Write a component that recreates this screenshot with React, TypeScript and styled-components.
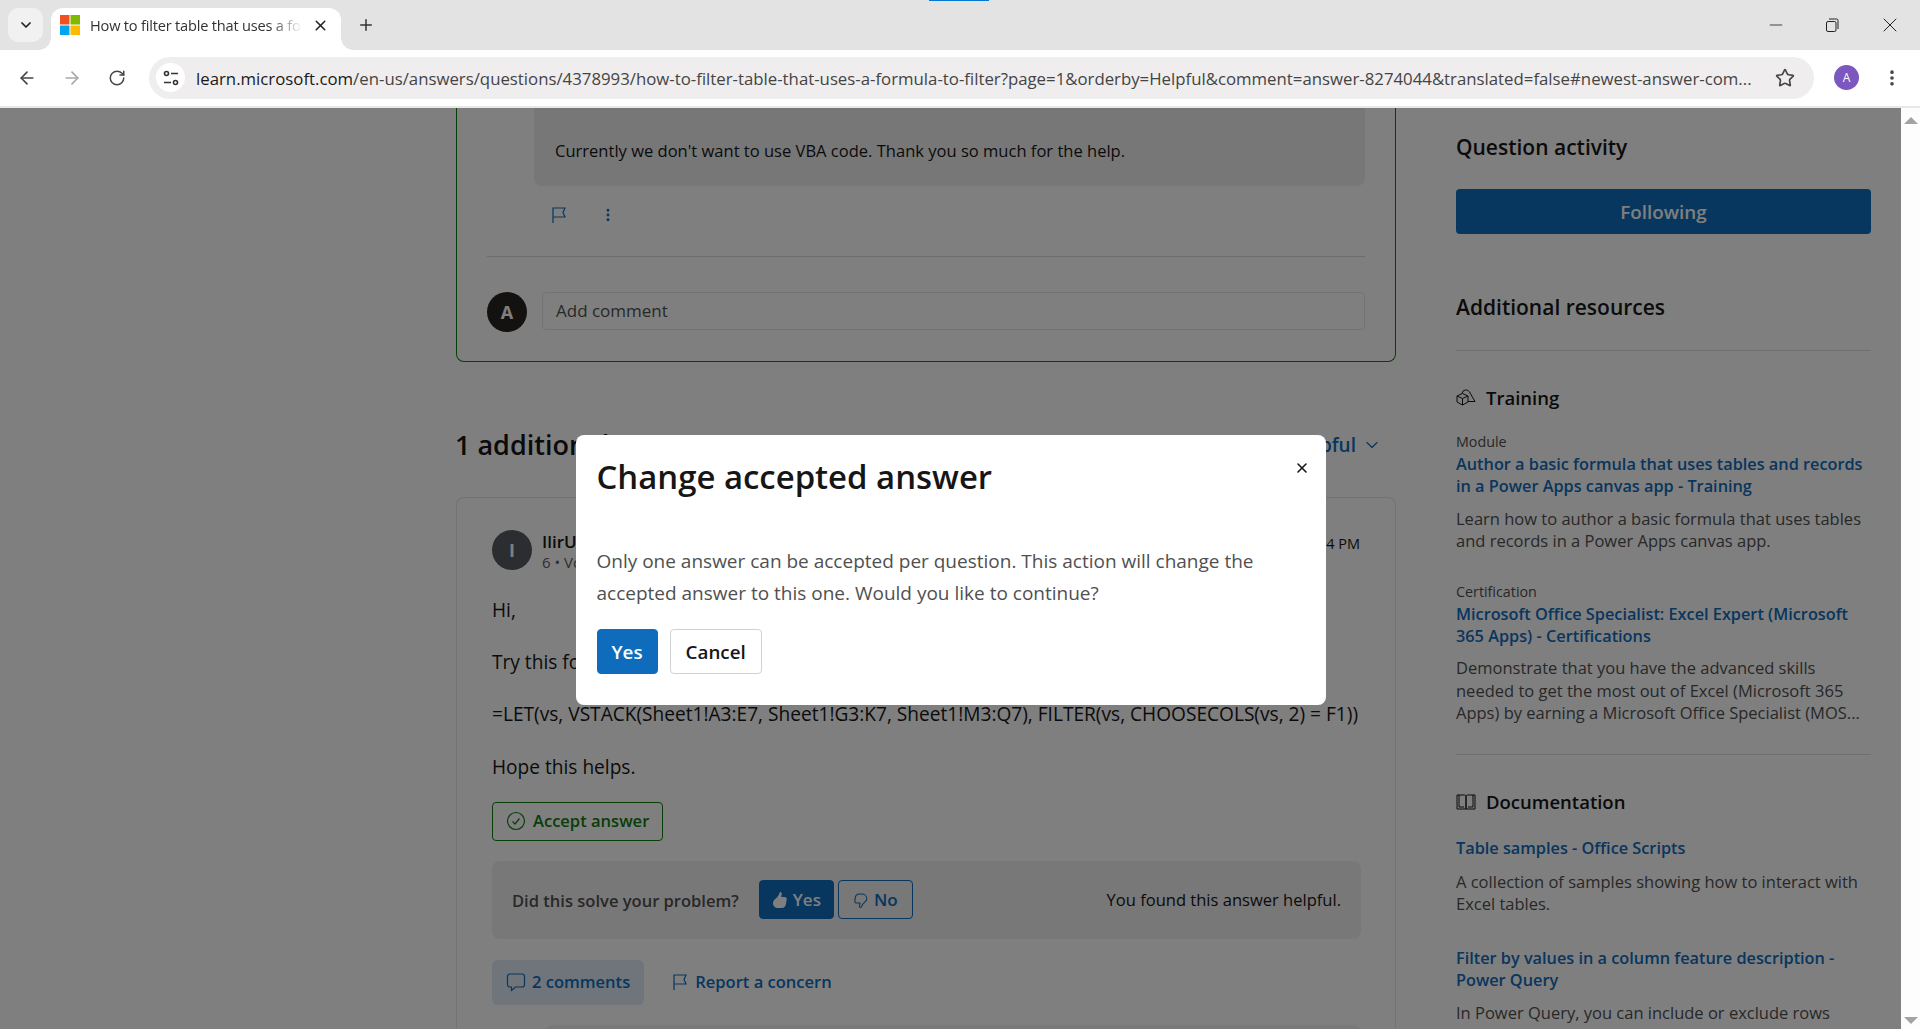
import React from 'react';
import styled, { createGlobalStyle } from 'styled-components';
import { ArrowLeft, ArrowRight, ChevronDown, EllipsisVertical, Minus, Plus, RotateCw, Star, X } from 'lucide-react';

const GlobalStyle = createGlobalStyle`
  html, body {
    margin: 0;
    height: 100%;
    overflow: hidden;
    background: #fff;
  }

  * {
    box-sizing: border-box;
  }

  body {
    font-family: 'Open Sans', 'Noto Sans', sans-serif;
    color: #161616;
  }
`;

const Shell = styled.div`
  display: flex;
  flex-direction: column;
  height: 100vh;
  overflow: hidden;
`;

/* browser chrome */
const TabStrip = styled.div`
  position: relative;
  display: flex;
  align-items: flex-end;
  height: 50px;
  padding-left: 8px;
  background: #e3e3e3;
  flex-shrink: 0;

  &::before {
    content: '';
    position: absolute;
    top: 0;
    left: 929px;
    width: 60px;
    height: 1px;
    background: #0078d4;
  }
`;

const TabSearch = styled.div`
  display: flex;
  align-items: center;
  justify-content: center;
  align-self: flex-start;
  width: 35px;
  height: 34px;
  margin-top: 8px;
  border-radius: 10px;
  background: #f1f1f1;
  color: #222;
`;

const Tab = styled.div`
  position: relative;
  display: flex;
  align-items: center;
  width: 290px;
  height: 42px;
  margin-left: 8px;
  padding: 0 12px 8px 9px;
  border-radius: 12px 12px 0 0;
  background: #fff;

  &::before,
  &::after {
    content: '';
    position: absolute;
    bottom: 0;
    width: 12px;
    height: 12px;
    background: radial-gradient(circle at 0 0, #e3e3e3 11.5px, #fff 12px);
  }

  &::before {
    left: -12px;
  }

  &::after {
    right: -12px;
    background: radial-gradient(circle at 100% 0, #e3e3e3 11.5px, #fff 12px);
  }
`;

const Favicon = styled.svg`
  width: 20px;
  height: 20px;
  flex-shrink: 0;
`;

const TabTitle = styled.div`
  flex: 1;
  margin-left: 10px;
  overflow: hidden;
  white-space: nowrap;
  font-size: 14.6px;
  letter-spacing: -0.2px;
  color: #333;
  mask-image: linear-gradient(to right, #000 85%, transparent 100%);
`;

const TabClose = styled.div`
  display: flex;
  align-items: center;
  margin-left: 10px;
  color: #222;
`;

const NewTab = styled.div`
  display: flex;
  align-self: flex-start;
  margin: 16px 0 0 16px;
  color: #333;
`;

const WindowControls = styled.div`
  display: flex;
  align-self: flex-start;
  align-items: center;
  gap: 36px;
  height: 50px;
  margin-left: auto;
  padding-right: 18px;
  color: #222;
`;

const Toolbar = styled.div`
  display: flex;
  align-items: center;
  height: 58px;
  padding: 0 18px 1px 17px;
  border-bottom: 2px solid #e8e8e8;
  border-radius: 10px 10px 0 0;
  background: #fff;
  flex-shrink: 0;
`;

const NavButton = styled.div<{ $muted?: boolean }>`
  display: flex;
  align-items: center;
  justify-content: center;
  width: 20px;
  margin-right: 25px;
  color: ${(props) => (props.$muted ? '#a8a8a8' : '#474747')};
`;

const UrlBar = styled.div`
  display: flex;
  align-items: center;
  width: 1665px;
  height: 42px;
  margin-left: -3px;
  padding: 0 19px 0 7px;
  border-radius: 21px;
  background: #efedee;
`;

const SiteChip = styled.div`
  display: flex;
  align-items: center;
  justify-content: center;
  width: 29px;
  height: 29px;
  border-radius: 50%;
  background: #fff;
  flex-shrink: 0;
`;

const UrlText = styled.div`
  flex: 1;
  margin: 0 14px 0 11px;
  padding-top: 1px;
  overflow: hidden;
  white-space: nowrap;
  font-size: 16.8px;
  color: #444;

  b {
    font-weight: 400;
    color: #1a1a1a;
  }
`;

const ProfileBadge = styled.div`
  display: flex;
  align-items: center;
  justify-content: center;
  width: 25px;
  height: 25px;
  margin-left: 20px;
  border-radius: 50%;
  background: #7c57bf;
  color: #fff;
  font-size: 12px;
`;

const MenuButton = styled.div`
  display: flex;
  margin-left: 23px;
  color: #474747;
`;

/* page */
const PageArea = styled.div`
  position: relative;
  display: flex;
  flex: 1;
  min-height: 0;
`;

const Viewport = styled.div`
  display: grid;
  grid-template-columns: 940px 415px;
  column-gap: 60px;
  flex: 1;
  min-width: 0;
  padding-left: 456px;
  overflow: hidden;
  background: #fff;
  font-size: 16.55px;
  line-height: 24px;
`;

const ScrollTrack = styled.div`
  display: flex;
  flex-direction: column;
  align-items: center;
  justify-content: space-between;
  width: 19px;
  padding: 9px 0 5px;
  background: #fdfdfd;
  flex-shrink: 0;
`;

const ScrollArrow = styled.div<{ $down?: boolean }>`
  width: 0;
  height: 0;
  border-left: 7px solid transparent;
  border-right: 7px solid transparent;
  ${(props) => (props.$down ? 'border-top: 7px solid #a3a3a3;' : 'border-bottom: 7px solid #a3a3a3;')}
`;

const MainColumn = styled.div`
  min-width: 0;
`;

const AcceptedCard = styled.div`
  height: 254px;
  padding: 0 30px;
  border: 1px solid #107c10;
  border-top: none;
  border-radius: 0 0 8px 8px;
`;

const QuoteBox = styled.div`
  height: 78px;
  margin-left: 47px;
  padding: 31px 21px 0;
  border-radius: 0 0 8px 8px;
  background: #efefef;
`;

const CommentActions = styled.div`
  display: flex;
  align-items: center;
  gap: 32px;
  height: 58px;
  margin-left: 63px;
  color: #0f6cbd;
`;

const AddCommentRow = styled.div`
  display: flex;
  gap: 15px;
  margin-top: 12px;
  padding-top: 35px;
  border-top: 1px solid #d8d8d8;
`;

const Avatar = styled.div<{ $bg: string }>`
  display: flex;
  align-items: center;
  justify-content: center;
  width: 40px;
  height: 40px;
  border-radius: 50%;
  background: ${(props) => props.$bg};
  color: #fff;
  font-size: 18px;
  font-weight: 700;
  flex-shrink: 0;
`;

const CommentInput = styled.div`
  flex: 1;
  height: 38px;
  padding: 0 13px;
  border: 1px solid #e6e6e6;
  border-radius: 4px;
  font-size: 17px;
  line-height: 36px;
  color: #505050;
`;

const AnswersHeader = styled.div`
  display: flex;
  align-items: center;
  justify-content: space-between;
  height: 44px;
  margin: 61px 0 30px;
`;

const AnswersTitle = styled.h2`
  margin: 0 0 0 -1px;
  font-size: 27px;
  font-weight: 600;
`;

const SortControl = styled.div`
  display: flex;
  align-items: center;
  gap: 6px;
  margin-right: 14px;
  font-size: 19px;
  font-weight: 600;
  color: #0f6cbd;
`;

const AnswerCard = styled.div`
  padding: 32px 34px 0 35px;
  border: 1px solid #e6e6e6;
  border-bottom: none;
  border-radius: 8px 8px 0 0;
`;

const AuthorRow = styled.div`
  display: flex;
  gap: 10px;
  margin-bottom: 26px;
`;

const AuthorInfo = styled.div`
  flex: 1;
  padding-top: 1px;
`;

const AuthorName = styled.div`
  font-size: 17px;
  line-height: 21px;
  font-weight: 600;
`;

const AuthorMeta = styled.div`
  font-size: 15px;
  line-height: 20px;
  color: #616161;
`;

const PostDate = styled.div`
  padding: 2px 1px 0 0;
  font-size: 14.5px;
`;

const BodyLine = styled.p`
  margin: 0 0 28.2px;
  font-size: 19.13px;
  white-space: nowrap;
`;

const AcceptButton = styled.div`
  display: flex;
  align-items: center;
  gap: 7px;
  width: fit-content;
  height: 39px;
  margin-top: -5px;
  padding: 0 13px;
  border: 1px solid #107c10;
  border-radius: 4px;
  font-weight: 600;
  color: #107c10;
`;

const FeedbackBanner = styled.div`
  display: flex;
  align-items: center;
  height: 78px;
  margin-top: 20px;
  padding: 0 20px;
  border-radius: 8px;
  background: #f0f0f0;
`;

const FeedbackLabel = styled.div`
  margin: 3px 20px 0 0;
  font-weight: 600;
  color: #505050;
`;

const VoteButton = styled.div<{ $active?: boolean }>`
  display: flex;
  align-items: center;
  gap: 5px;
  height: 39px;
  margin-right: 4px;
  padding: ${(props) => (props.$active ? '0 12px' : '0 14px')};
  border: 1px solid #0f6cbd;
  border-radius: 4px;
  font-size: 17px;
  font-weight: 600;
  background: ${(props) => (props.$active ? '#0f6cbd' : 'transparent')};
  color: ${(props) => (props.$active ? '#fff' : '#0f6cbd')};
`;

const FeedbackNote = styled.div`
  margin-left: auto;
`;

const AnswerActions = styled.div`
  display: flex;
  align-items: center;
  gap: 27px;
  margin-top: 21px;
`;

const ActionLink = styled.div<{ $selected?: boolean }>`
  display: flex;
  align-items: center;
  gap: 6px;
  height: 45px;
  padding: ${(props) => (props.$selected ? '0 14px' : '0')};
  border-radius: 6px;
  font-weight: 600;
  background: ${(props) => (props.$selected ? '#dfeaf6' : 'transparent')};
  color: #0f6cbd;
`;

const NestedComments = styled.div`
  height: 60px;
  margin: 20px 0 0 53px;
  border-radius: 8px 8px 0 0;
  background: #f2f2f2;
`;

/* sidebar */
const Sidebar = styled.aside`
  min-width: 0;
  padding-top: 25px;
`;

const SideTitle = styled.h3<{ $gap?: number }>`
  margin: ${(props) => props.$gap ?? 0}px 0 0;
  font-size: 21px;
  line-height: 28px;
  font-weight: 600;
`;

const FollowButton = styled.div`
  height: 45px;
  margin-top: 28px;
  border-radius: 4px;
  background: #0f6cbd;
  color: #fff;
  font-size: 18.8px;
  line-height: 46px;
  font-weight: 600;
  text-align: center;
`;

const SideRule = styled.div<{ $top: number; $bottom: number }>`
  height: 1px;
  margin: ${(props) => props.$top}px 0 ${(props) => props.$bottom}px;
  background: #dedede;
`;

const GroupTitle = styled.div`
  display: flex;
  align-items: center;
  gap: 10px;
  font-size: 18.5px;
  line-height: 24px;
  font-weight: 600;
`;

const ResourceKind = styled.div<{ $gap: number }>`
  margin-top: ${(props) => props.$gap}px;
  font-size: 14.3px;
  line-height: 20px;
  color: #505050;
`;

const ResourceLink = styled.div<{ $gap?: number }>`
  margin-top: ${(props) => props.$gap ?? 1}px;
  font-size: 16.3px;
  line-height: 22px;
  font-weight: 600;
  color: #0f6cbd;
`;

const ResourceText = styled.div<{ $gap?: number }>`
  margin-top: ${(props) => props.$gap ?? 10.5}px;
  font-size: 16.5px;
  line-height: 22.5px;
  color: #505050;
`;

/* dialog */
const Backdrop = styled.div`
  position: absolute;
  top: 0;
  left: 0;
  right: 19px;
  bottom: 0;
  display: flex;
  align-items: center;
  justify-content: center;
  padding-top: 3px;
  background: rgba(0, 0, 0, 0.5);
`;

const Dialog = styled.div`
  position: relative;
  width: 750px;
  height: 270px;
  padding: 20px 21px;
  border-radius: 8px;
  background: #fff;
`;

const DialogClose = styled.div`
  position: absolute;
  top: 25px;
  right: 16px;
  display: flex;
  color: #161616;
`;

const DialogTitle = styled.h2`
  margin: 0;
  font-size: 32.9px;
  line-height: 44px;
  font-weight: 600;
`;

const DialogText = styled.p`
  margin: 46px 0 0;
  font-size: 19px;
  line-height: 32px;
  color: #505050;
`;

const DialogButtons = styled.div`
  display: flex;
  gap: 12px;
  margin-top: 20px;
`;

const DialogButton = styled.div<{ $primary?: boolean }>`
  display: flex;
  align-items: center;
  justify-content: center;
  height: 45px;
  padding: ${(props) => (props.$primary ? '0 14px' : '0 15px')};
  border: 1px solid ${(props) => (props.$primary ? '#0f6cbd' : '#d1d1d1')};
  border-radius: 4px;
  font-size: 18.8px;
  font-weight: 600;
  background: ${(props) => (props.$primary ? '#0f6cbd' : '#fff')};
  color: ${(props) => (props.$primary ? '#fff' : '#161616')};
`;

const FlagIcon = ({ size = 18 }: { size?: number }) => (
  <svg width={size} height={size} viewBox="0 0 18 18" fill="none" stroke="currentColor" strokeWidth="1.2">
    <path d="M3 17V2h12l-2 4.5 2 4.5H3" />
  </svg>
);

const App: React.FC = () => {
  return (
    <Shell>
      <GlobalStyle />
      <TabStrip>
        <TabSearch>
          <ChevronDown size={16} strokeWidth={2.6} />
        </TabSearch>
        <Tab>
          <Favicon viewBox="0 0 20 20">
            <rect x="0" y="0" width="9.5" height="9.5" fill="#f25022" />
            <rect x="10.5" y="0" width="9.5" height="9.5" fill="#7fba00" />
            <rect x="0" y="10.5" width="9.5" height="9.5" fill="#00a4ef" />
            <rect x="10.5" y="10.5" width="9.5" height="9.5" fill="#ffb900" />
          </Favicon>
          <TabTitle>How to filter table that uses a formula to filter</TabTitle>
          <TabClose>
            <X size={17} strokeWidth={2.2} />
          </TabClose>
        </Tab>
        <NewTab>
          <Plus size={18} strokeWidth={2} />
        </NewTab>
        <WindowControls>
          <Minus size={20} strokeWidth={1} />
          <svg width="20" height="20" viewBox="0 0 20 20" fill="none" stroke="currentColor" strokeWidth="1">
            <rect x="4.5" y="6.5" width="9.5" height="10" rx="1.5" />
            <path d="M7 4h7.5A1.5 1.5 0 0 1 16 5.5V14" />
          </svg>
          <X size={24} strokeWidth={1} />
        </WindowControls>
      </TabStrip>
      <Toolbar>
        <NavButton>
          <ArrowLeft size={20} strokeWidth={2} />
        </NavButton>
        <NavButton $muted>
          <ArrowRight size={20} strokeWidth={2} />
        </NavButton>
        <NavButton>
          <RotateCw size={18} strokeWidth={2} />
        </NavButton>
        <UrlBar>
          <SiteChip>
            <svg width="18" height="18" viewBox="0 0 18 18" fill="none" stroke="#333" strokeWidth="1.6">
              <circle cx="4.5" cy="4.5" r="2" />
              <path d="M9 4.5h7M2 13.5h7" />
              <circle cx="13.5" cy="13.5" r="2" />
            </svg>
          </SiteChip>
          <UrlText>
            <b>learn.microsoft.com</b>/en-us/answers/questions/4378993/how-to-filter-table-that-uses-a-formula-to-filter?page=1&amp;orderby=Helpful&amp;comment=answer-8274044&amp;translated=false#newest-answer-com...
          </UrlText>
          <Star size={20} strokeWidth={2} color="#474747" />
        </UrlBar>
        <ProfileBadge>A</ProfileBadge>
        <MenuButton>
          <EllipsisVertical size={20} strokeWidth={2.4} />
        </MenuButton>
      </Toolbar>

      <PageArea>
        <Viewport>
          <MainColumn>
            <AcceptedCard>
              <QuoteBox>Currently we don't want to use VBA code. Thank you so much for the help.</QuoteBox>
              <CommentActions>
                <FlagIcon />
                <EllipsisVertical size={16} strokeWidth={2.4} />
              </CommentActions>
              <AddCommentRow>
                <Avatar $bg="#282522">A</Avatar>
                <CommentInput>Add comment</CommentInput>
              </AddCommentRow>
            </AcceptedCard>

            <AnswersHeader>
              <AnswersTitle>1 additional answer</AnswersTitle>
              <SortControl>
                Sort by: Most helpful
                <ChevronDown size={20} strokeWidth={1.4} />
              </SortControl>
            </AnswersHeader>

            <AnswerCard>
              <AuthorRow>
                <Avatar $bg="#565a60">I</Avatar>
                <AuthorInfo>
                  <AuthorName>IlirU</AuthorName>
                  <AuthorMeta>6 • Volunteer</AuthorMeta>
                </AuthorInfo>
                <PostDate>4 PM</PostDate>
              </AuthorRow>
              <BodyLine>Hi,</BodyLine>
              <BodyLine>Try this formula:</BodyLine>
              <BodyLine>=LET(vs, VSTACK(Sheet1!A3:E7, Sheet1!G3:K7, Sheet1!M3:Q7), FILTER(vs, CHOOSECOLS(vs, 2) = F1))</BodyLine>
              <BodyLine>Hope this helps.</BodyLine>
              <AcceptButton>
                <svg width="20" height="20" viewBox="0 0 20 20" fill="none" stroke="currentColor" strokeWidth="1.2">
                  <circle cx="10" cy="10" r="8.5" />
                  <path d="M6.5 10.5l2.5 2.5 4.5-5.5" />
                </svg>
                Accept answer
              </AcceptButton>
              <FeedbackBanner>
                <FeedbackLabel>Did this solve your problem?</FeedbackLabel>
                <VoteButton $active>
                  <svg width="16" height="18" viewBox="0 0 16 18" fill="currentColor">
                    <path d="M8.5 1c1 0 1.4 1 1.2 2.2L9.3 6h3.2c1.6 0 2.5 1.2 2.2 2.7l-.8 4.6C13.5 15.7 12 17 9.8 17H6c-2.8 0-5-2-5-4.800 0-2 1-3.200 2.500-4.400C5.500 6.200 7 4 7.500 2c.1-.6.500-1 1-1z" />
                  </svg>
                  Yes
                </VoteButton>
                <VoteButton>
                  <svg width="16" height="18" viewBox="0 0 16 18" fill="none" stroke="currentColor" strokeWidth="1.1">
                    <path d="M7.5 16.5c-.8 0-1.2-.8-1-1.8l.4-2.700H4c-1.500 0-2.500-1-2.200-2.400l.6-3.300C2.800 4 4.300 3 6.500 3h2.300c2.800 0 5 2 5 4.500 0 1.700-.9 2.900-2.300 3.900-1.400 1-2.500 2.700-2.900 4-.2.700-.5 1.100-1.100 1.100z" />
                  </svg>
                  No
                </VoteButton>
                <FeedbackNote>You found this answer helpful.</FeedbackNote>
              </FeedbackBanner>
              <AnswerActions>
                <ActionLink $selected>
                  <svg width="20" height="20" viewBox="0 0 20 20" fill="none" stroke="currentColor" strokeWidth="1.2">
                    <path d="M4 2h12a2.5 2.5 0 0 1 2.5 2.5v8A2.5 2.5 0 0 1 16 15h-6.5L5.5 18.5V15H4a2.5 2.5 0 0 1-2.500-2.500v-8A2.500 2.500 0 0 1 4 2z" />
                  </svg>
                  2 comments
                </ActionLink>
                <ActionLink>
                  <FlagIcon />
                  Report a concern
                </ActionLink>
              </AnswerActions>
              <NestedComments />
            </AnswerCard>
          </MainColumn>

          <Sidebar>
            <SideTitle>Question activity</SideTitle>
            <FollowButton>Following</FollowButton>
            <SideTitle $gap={59}>Additional resources</SideTitle>
            <SideRule $top={29} $bottom={35} />
            <GroupTitle>
              <svg width="20" height="18" viewBox="0 0 20 18" fill="none" stroke="currentColor" strokeWidth="1">
                <path d="M1 7l5.5-2.500L12 7v6l-5.500 3L1 13V7zM1 7l5.500 2.500L12 7M6.500 9.500V16" />
                <path d="M6 4.500a4 4 0 0 1 7.500-1.500L19 12.500h-7" />
              </svg>
              Training
            </GroupTitle>
            <ResourceKind $gap={22}>Module</ResourceKind>
            <ResourceLink>Author a basic formula that uses tables and records in a Power Apps canvas app - Training</ResourceLink>
            <ResourceText>Learn how to author a basic formula that uses tables and records in a Power Apps canvas app.</ResourceText>
            <ResourceKind $gap={29}>Certification</ResourceKind>
            <ResourceLink>Microsoft Office Specialist: Excel Expert (Microsoft 365 Apps) - Certifications</ResourceLink>
            <ResourceText>
              Demonstrate that you have the advanced skills needed to get the most out of Excel (Microsoft 365 Apps) by earning a Microsoft Office Specialist (MOS...
            </ResourceText>
            <SideRule $top={29} $bottom={35} />
            <GroupTitle>
              <svg width="20" height="18" viewBox="0 0 20 18" fill="none" stroke="currentColor" strokeWidth="1">
                <path d="M1 2h7.500c.8 0 1.500.7 1.500 1.500V16H1V2zM19 2h-7.500c-.8 0-1.500.7-1.500 1.500V16h9V2zM3 2v12h5M17 2v12h-5" />
              </svg>
              Documentation
            </GroupTitle>
            <ResourceLink $gap={23}>Table samples - Office Scripts</ResourceLink>
            <ResourceText $gap={12}>A collection of samples showing how to interact with Excel tables.</ResourceText>
            <ResourceLink $gap={31}>Filter by values in a column feature description - Power Query</ResourceLink>
            <ResourceText $gap={11}>In Power Query, you can include or exclude rows based on a value.</ResourceText>
          </Sidebar>
        </Viewport>
        <ScrollTrack>
          <ScrollArrow />
          <ScrollArrow $down />
        </ScrollTrack>

        <Backdrop>
          <Dialog>
            <DialogClose>
              <X size={16} strokeWidth={2.4} />
            </DialogClose>
            <DialogTitle>Change accepted answer</DialogTitle>
            <DialogText>
              Only one answer can be accepted per question. This action will change the accepted answer to this one. Would you like to continue?
            </DialogText>
            <DialogButtons>
              <DialogButton $primary>Yes</DialogButton>
              <DialogButton>Cancel</DialogButton>
            </DialogButtons>
          </Dialog>
        </Backdrop>
      </PageArea>
    </Shell>
  );
};

export default App;
